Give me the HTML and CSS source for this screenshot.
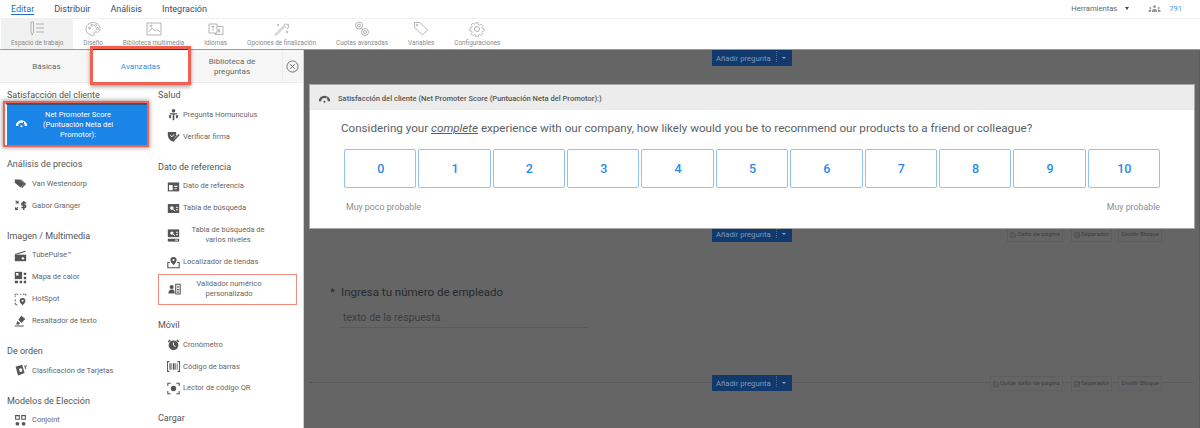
FILE: index.html
```html
<!doctype html>
<html lang="es">
    <head>
        <meta charset="UTF-8" />
        <title>Editar encuesta</title>
        <link rel="stylesheet" href="styles.css">
    </head>
    <body>
        <header class="topbar">
            <nav class="main-nav">
                <a class="active">Editar</a>
                <a>Distribuir</a>
                <a>Análisis</a>
                <a>Integración</a>
            </nav>
            <div class="tools">
                <span>Herramientas</span>
                <span class="caret"></span>
                <svg class="users" viewBox="0 0 14 8"><circle cx="7" cy="2" r="1.6"/><path d="M4 8c0-3 1-3.500 3-3.500S10 5 10 8z"/><circle cx="2.200" cy="3.500" r="1.100"/><path d="M0 8c0-2 .8-2.800 2.200-2.800.6 0 1 .1 1.300.4C3 6 3 7 3 8z"/><circle cx="11.800" cy="3.500" r="1.100"/><path d="M14 8c0-2-.8-2.800-2.200-2.800-.6 0-1 .1-1.300.4.500.4.500 1.400.500 2.400z"/></svg>
                <span class="count">791</span>
            </div>
        </header>

        <div class="toolbar">
            <div class="tool current">
                <svg viewBox="0 0 16 16"><path d="M2 1h2.500v10L3.250 14 2 11zM7 3h8M7 7h8M7 11h8"/></svg>
                <span>Espacio de trabajo</span>
            </div>
            <div class="tool">
                <svg viewBox="0 0 16 16"><path d="M8 1.500c4 0 7 2.500 7 6s-2.500 4-4 3.500-2.500.5-2 2-1 1.800-2.500 1.300C3 13.500 1 11 1 8c0-3.500 3-6.500 7-6.500z"/><circle cx="4.500" cy="7" r="1"/><circle cx="7" cy="4.200" r="1"/><circle cx="10.500" cy="4.500" r="1"/><circle cx="12.500" cy="7.500" r="1"/></svg>
                <span>Diseño</span>
            </div>
            <div class="tool">
                <svg viewBox="0 0 16 16"><path d="M1 2h14v12H1zM2.500 11l3.500-4 3 3 2-1.500 3 2.500"/><circle cx="5" cy="5" r="1"/></svg>
                <span>Biblioteca multimedia</span>
            </div>
            <div class="tool">
                <svg viewBox="0 0 16 16"><path d="M1 3h8v9H1zM9 5.500h6v8H7V12M3.500 5.500h3M5 5.500v4M10 11.500l1-3.500 1 3.500"/></svg>
                <span>Idiomas</span>
            </div>
            <div class="tool">
                <svg viewBox="0 0 16 16"><path d="M2 14.500l-1-1 9-9 1 1zM10 4.500l1.500-2 1 1 2-.5-.5 2 1 1-2 1.500-1-1M4 3v2M3 4h2M13 10v2M12 11h2"/></svg>
                <span>Opciones de finalización</span>
            </div>
            <div class="tool">
                <svg viewBox="0 0 16 16"><circle cx="5" cy="4.500" r="3.500"/><circle cx="5" cy="4.500" r="1.500"/><circle cx="11" cy="11" r="3.500"/><circle cx="11" cy="11" r="1.500"/><path d="M7.500 7l1 1.500"/></svg>
                <span>Cuotas avanzadas</span>
            </div>
            <div class="tool">
                <svg viewBox="0 0 16 16"><path d="M1.500 1.500h5.500l7.500 7.500-5 5L1.500 6.500z"/><circle cx="4" cy="4" r=".8"/></svg>
                <span>Variables</span>
            </div>
            <div class="tool">
                <svg viewBox="0 0 16 16"><circle cx="8" cy="8" r="2.500"/><path d="M6.800 1h2.400l.4 2 1.300.6 1.800-1.100 1.700 1.700-1.100 1.800.6 1.300 2 .4v2.400l-2 .4-.6 1.300 1.100 1.800-1.700 1.700-1.800-1.100-1.300.6-.4 2H6.800l-.4-2-1.300-.6-1.800 1.100-1.700-1.700 1.100-1.800-.6-1.300-2-.4V6.800l2-.4.6-1.300-1.100-1.800 1.700-1.700 1.800 1.100 1.300-.6z" transform="translate(.8 .8) scale(.9)"/></svg>
                <span>Configuraciones</span>
            </div>
        </div>

        <main class="workspace">
            <aside class="panel">
                <div class="tabs">
                    <div class="tab basic">Básicas</div>
                    <div class="tab tab-active">Avanzadas</div>
                    <div class="tab library">Biblioteca de preguntas</div>
                    <div class="tab close">
                        <svg viewBox="0 0 14 14"><circle cx="7" cy="7" r="6"/><path d="M4.500 4.500l5 5M9.500 4.500l-5 5"/></svg>
                    </div>
                </div>
                <div class="columns">
                    <div class="col">
                        <section>
                            <h3>Satisfacción del cliente</h3>
                            <div class="nps-item">
                                <svg viewBox="0 3 16 16"><path class="gauge" d="M2.500 11.500a5.500 5.500 0 0 1 11 0"/><path class="needle" d="M8 11l3-4.500"/><circle cx="8" cy="12" r="1.300"/></svg>
                                <span>Net Promoter Score (Puntuación Neta del Promotor):</span>
                            </div>
                        </section>
                        <section>
                            <h3>Análisis de precios</h3>
                            <div class="item"><svg viewBox="0 0 16 16"><path d="M1 3h6l6 5.500L8 13 1 7z"/><path d="M9 3l6 5.500-5 5-1-1 4-4-5.500-5.500z"/></svg><span>Van Westendorp</span></div>
                            <div class="item"><svg viewBox="0 0 16 16"><path d="M2 2l3 3M5 2v3H2M5 10l-3 3M2 10v3h3" class="thin"/><path d="M15 4.500h-4c-2 0-2 3 0 3h2c2 0 2 3 0 3H9M12 2.500v11" class="thick"/></svg><span>Gabor Granger</span></div>
                        </section>
                        <section>
                            <h3>Imagen / Multimedia</h3>
                            <div class="item"><svg viewBox="0 0 16 16"><path d="M1 7h14v8H1z"/><path d="M1 6L14 2l.5 1.500L1.500 7.500z"/><circle cx="11" cy="11.500" r="1.500" fill="#fff"/></svg><span>TubePulse™</span></div>
                            <div class="item"><svg viewBox="0 0 16 16"><path d="M1 1h9v9H1z"/><path d="M2.500 2.500h3v3h-3z" fill="#fff"/><path d="M12 2h3v3h-3zM12 7h3v3h-3zM1 12h4v3H1zM7 12h3v3H7zM12 12h3v3h-3z"/></svg><span>Mapa de calor</span></div>
                            <div class="item"><svg viewBox="0 0 16 16"><path class="thin" d="M5 1.500H1.500V5M1.500 8v2M1.500 12v2.500H4M11 1.500h3.500V4M7.500 1.500h1.500" stroke-dasharray="2 1"/><circle cx="10.500" cy="9.500" r="3.500"/><circle cx="10.500" cy="9.500" r="1.200" fill="#fff"/><path d="M8 12l2.500 3.500L13 12z"/></svg><span>HotSpot</span></div>
                            <div class="item"><svg viewBox="0 0 16 16"><path d="M9 2l5 4-5 5-3.500-4zM4.500 8.500l3 3-1.500 1.500H2.500zM1 14h11v1.500H1z"/></svg><span>Resaltador de texto</span></div>
                        </section>
                        <section>
                            <h3>De orden</h3>
                            <div class="item"><svg viewBox="0 0 16 16"><path d="M2 3.500L10 1l3 10-8 3z"/><path d="M6 6l3-1 1.500 4-3 1z" fill="#fff"/><path class="thin" d="M13 2l1.500 4M15 1.500v2"/></svg><span>Clasificación de Tarjetas</span></div>
                        </section>
                        <section>
                            <h3>Modelos de Elección</h3>
                            <div class="item"><svg viewBox="0 0 16 16"><path class="thin" d="M2 2h4.500v4.500H2zM9.500 2H14v4.500H9.500z"/><circle cx="4.200" cy="12" r="2.300"/><circle cx="11.800" cy="12" r="2.300"/></svg><span>Conjoint</span></div>
                        </section>
                    </div>
                    <div class="col">
                        <section>
                            <h3>Salud</h3>
                            <div class="item right"><svg viewBox="0 0 16 16"><circle cx="8" cy="3.500" r="2.200"/><path d="M3 6.500h10l-1 1.500H9v7H7V8H4zM2 9h3v3.500H3zM14 9h-3v3.500h2z"/></svg><span>Pregunta Homunculus</span></div>
                            <div class="item right"><svg viewBox="0 0 16 16"><path d="M1 2.500h10l.5 4-5 7.500C3 12.500 1 9 1 6z"/><path d="M4 6.500l2 2 2.500-3" class="white"/><path d="M7 14l8-8.500" class="thick"/></svg><span>Verificar firma</span></div>
                        </section>
                        <section>
                            <h3>Dato de referencia</h3>
                            <div class="item right"><svg viewBox="0 0 16 16"><path d="M1 3h14v11H1z"/><path d="M2.500 6h4.500v6.500H2.500zM9 7h4v1.500H9zM9 10h3v1.500H9z" fill="#fff"/></svg><span>Dato de referencia</span></div>
                            <div class="item right"><svg viewBox="0 0 16 16"><path d="M1 2.500h14v11H1z"/><circle cx="6" cy="7.500" r="2.200" fill="#fff"/><path d="M7.500 9.200l2.500 2" class="white"/><path d="M11 6.500h2.500M11 9.500h2.500" class="white"/></svg><span>Tabla de búsqueda</span></div>
                            <div class="item right tall"><svg viewBox="0 0 16 16"><path d="M1 .5h14v9.500H1z"/><circle cx="6" cy="5" r="2" fill="#fff"/><path d="M7.500 6.500l2 1.600M11 4h2.500M11 7h2.500" class="white"/><path d="M1 12h14v3.500H1z"/><path d="M10 13.700h3.500" class="white"/></svg><span class="centered">Tabla de búsqueda de varios niveles</span></div>
                            <div class="item right"><svg viewBox="0 0 16 16"><path class="outline" d="M3.500 8H1v6.500h14V8h-2.500"/><circle cx="8" cy="5" r="3.800"/><circle cx="8" cy="5" r="1.300" fill="#fff"/><path d="M5 8l3 3 3-3z"/></svg><span>Localizador de tiendas</span></div>
                            <div class="item right boxed"><svg viewBox="0 0 16 16"><circle cx="4.500" cy="5" r="2.500"/><path d="M.5 13c0-3.500 1.500-5 4-5s3 .8 3.500 2v3z"/><path class="outline" d="M9.500 1.500h5.500v12H9.500z"/><path d="M11 4h2.500v1.500H11zM11 7.500h2.500V9H11zM11 10.500h2.500V12H11z"/></svg><span class="centered">Validador numérico personalizado</span></div>
                        </section>
                        <section class="mobile">
                            <h3>Móvil</h3>
                            <div class="item right"><svg viewBox="0 0 16 16"><circle cx="8" cy="9" r="6"/><path d="M8 5.500V9l2.500 1.500" class="white"/><path d="M1.500 5L4 2.500M14.500 5L12 2.500" class="thick"/></svg><span>Cronómetro</span></div>
                            <div class="item right"><svg viewBox="0 0 16 16"><path class="thin" d="M3 2H.5v12H3M13 2h2.500v12H13"/><path d="M3 4h1.500v8H3zM5.500 4h.8v8h-.8zM7.300 4h2v8h-2zM10.300 4h.8v8h-.8zM12 4h1v8h-1z"/></svg><span>Código de barras</span></div>
                            <div class="item right"><svg viewBox="0 0 16 16"><path class="thin" d="M1 5V1.500h3.500M11.500 1.500H15V5M15 11v3.500h-3.500M4.500 14.500H1V11"/><circle cx="8" cy="8" r="3.300"/></svg><span>Lector de código QR</span></div>
                        </section>
                        <section>
                            <h3>Cargar</h3>
                        </section>
                    </div>
                </div>
            </aside>

            <div class="canvas">
                <div class="add-row first">
                    <div class="add-btn"><span>Añadir pregunta</span><span class="add-caret"></span></div>
                </div>

                <article class="card">
                    <div class="card-head">
                        <svg viewBox="0 0 16 16"><path class="gauge" d="M2.500 11.500a5.500 5.500 0 0 1 11 0"/><path class="needle" d="M8 11l3-4.500"/><circle cx="8" cy="12" r="1.300"/></svg>
                        <span>Satisfacción del cliente (Net Promoter Score (Puntuación Neta del Promotor):)</span>
                    </div>
                    <div class="card-body">
                        <p class="question">Considering your <em>complete</em> experience with our company, how likely would you be to recommend our products to a friend or colleague?</p>
                        <div class="scale">
                            <div>0</div><div>1</div><div>2</div><div>3</div><div>4</div><div>5</div><div>6</div><div>7</div><div>8</div><div>9</div><div>10</div>
                        </div>
                        <div class="scale-labels">
                            <span>Muy poco probable</span>
                            <span>Muy probable</span>
                        </div>
                    </div>
                </article>

                <div class="add-row second">
                    <div class="add-btn"><span>Añadir pregunta</span><span class="add-caret"></span></div>
                    <div class="row-links">
                        <span class="break"><svg viewBox="0 0 8 8"><path d="M1 1h4l2 2v4H1zM3 4h2"/></svg>Salto de página</span>
                        <span><svg viewBox="0 0 8 8"><path d="M1 1h6v6H1zM2.500 4l1.200 1.300L7.500 1.500"/></svg>Separador</span>
                        <span>Dividir Bloque</span>
                    </div>
                </div>

                <div class="employee">
                    <h2><span class="req">*</span>Ingresa tu número de empleado</h2>
                    <div class="answer">texto de la respuesta</div>
                </div>

                <div class="add-row third">
                    <div class="add-btn"><span>Añadir pregunta</span><span class="add-caret"></span></div>
                    <div class="row-links">
                        <span class="break"><svg viewBox="0 0 8 8"><path d="M1 1h4l2 2v4H1zM3 4h2"/></svg>Quitar salto de página</span>
                        <span><svg viewBox="0 0 8 8"><path d="M1 1h6v6H1zM2.500 4l1.200 1.300L7.500 1.500"/></svg>Separador</span>
                        <span>Dividir Bloque</span>
                    </div>
                </div>
            </div>
        </main>
    </body>
</html>
```

FILE: styles.css
```css
* {
    box-sizing: border-box;
}
html,
body {
    height: 100%;
}
body {
    margin: 0;
    overflow: hidden;
    display: flex;
    flex-direction: column;
    font-family: Roboto, sans-serif;
    color: #555;
    background: #fff;
}

/* top nav */
.topbar {
    height: 19px;
    flex: none;
    display: flex;
    justify-content: space-between;
    align-items: center;
    padding: 0 18px 1px 11px;
    border-bottom: 1px solid #f0f0f0;
}
.main-nav {
    display: flex;
    gap: 20px;
    font-size: 9px;
    color: #36506e;
}
.main-nav .active {
    color: #1c6fc2;
    text-decoration: underline;
    text-underline-offset: 2px;
}
.tools {
    display: flex;
    align-items: center;
    font-size: 7.6px;
    color: #666;
}
.caret {
    width: 0;
    height: 0;
    margin: 0 19px 0 8px;
    border: 2.5px solid transparent;
    border-top: 3px solid #444;
    border-bottom: none;
}
.users {
    width: 13px;
    height: 7px;
    fill: #999;
}
.count {
    margin-left: 8px;
    color: #3c97ec;
}

/* icon toolbar */
.toolbar {
    height: 30px;
    flex: none;
    display: flex;
    padding-left: 1px;
}
.tool {
    display: flex;
    flex-direction: column;
    align-items: center;
    justify-content: flex-end;
    padding: 0 10px 1px;
    font-size: 6.36px;
    line-height: 9px;
    color: #8b8b8b;
    white-space: nowrap;
}
.tool.current {
    background: #f1f1f1;
}
.tool svg {
    width: 16px;
    height: 16px;
    margin-bottom: 2px;
    fill: none;
    stroke: #a2a2a2;
    stroke-width: 0.8;
}

/* main split */
.workspace {
    flex: 1;
    min-height: 0;
    display: flex;
    background: #656565;
    border-top: 1px solid #9a9a9a;
}
.panel {
    width: 304px;
    flex: none;
    background: #fff;
    border-right: 1px solid #cfcfcf;
}
.tabs {
    height: 33px;
    display: grid;
    grid-template-columns: 93px 95px 94px 21px;
    background: #f6f6f6;
    border-bottom: 1px solid #ececec;
    font-size: 8.1px;
    color: #666;
    text-align: center;
}
.tab {
    display: flex;
    align-items: center;
    justify-content: center;
    line-height: 10.5px;
}
.tab-active {
    position: relative;
    z-index: 2;
    height: 33px;
    margin-top: -1px;
    background: #fff;
    color: #2f8fe8;
    border-top: 1px solid #1d3c6b;
    outline: 3px solid #f4604f;
    box-shadow: 0 2px 4px 3px rgba(0, 0, 0, 0.35);
}
.library {
    padding: 0 22px 0 16px;
}
.close {
    border-left: 1px solid #ececec;
}
.close svg {
    width: 13px;
    height: 13px;
    margin-right: 2px;
    fill: none;
    stroke: #666;
    stroke-width: 1;
}
.columns {
    display: grid;
    grid-template-columns: 144px 139px;
    column-gap: 7px;
    padding: 6px 0 0 7px;
}
section {
    margin-bottom: 13px;
}
section.mobile {
    margin-top: 14px;
}
h3 {
    height: 12px;
    margin: 0 0 3px;
    font-size: 9px;
    font-weight: 400;
    line-height: 12px;
    color: #555;
    white-space: nowrap;
}
.item {
    height: 21.8px;
    display: flex;
    align-items: center;
    padding-left: 7px;
    font-size: 7.5px;
    line-height: 10px;
    color: #666;
    white-space: nowrap;
}
.item svg {
    width: 13px;
    height: 13px;
    flex: none;
    margin-right: 5px;
    fill: #555;
}
.item.right {
    padding-left: 9px;
}
.item.right svg {
    margin-right: 3px;
}
.item.tall {
    height: 32px;
}
.centered {
    width: 90px;
    white-space: normal;
    text-align: center;
}
.item.boxed {
    height: 31px;
    margin-top: 1px;
    border: 1px solid #f28a80;
}
.thin,
.outline,
.thick,
.white,
.gauge,
.needle {
    fill: none;
    stroke: #555;
}
.thin,
.outline {
    stroke-width: 1.3;
}
.thick {
    stroke-width: 1.8;
}
.white {
    stroke: #fff;
    stroke-width: 1.2;
}
.gauge {
    stroke-width: 3;
}
.needle {
    stroke-width: 1.2;
}

/* highlighted question type */
.nps-item {
    position: relative;
    display: flex;
    align-items: center;
    width: 141.5px;
    height: 42px;
    margin: -1px 0 3px -2px;
    padding-left: 8px;
    background: #1b84e7;
    border-left: 2px solid #fff;
    border-top: 2px solid #2b5a8c;
    outline: 2.5px solid #f4604f;
    box-shadow: 0 0 4px 3px rgba(0, 0, 0, 0.35);
    font-size: 7.5px;
    line-height: 10px;
    color: #fff;
    text-align: center;
}
.nps-item svg {
    width: 13px;
    height: 13px;
    flex: none;
    margin-right: 5px;
    fill: #fff;
}
.nps-item span {
    width: 90px;
}
.nps-item .gauge,
.nps-item .needle {
    stroke: #fff;
}
.nps-item .needle {
    stroke: #1b84e7;
}

/* survey canvas */
.canvas {
    flex: 1;
    min-width: 0;
    padding: 0 5px 0 6px;
    border-right: 1px solid #5a5a5a;
}
.add-row {
    position: relative;
    height: 16px;
    display: flex;
    justify-content: center;
}
.add-btn {
    width: 80px;
    height: 16px;
    display: flex;
    align-items: center;
    justify-content: space-between;
    padding: 0 4px;
    background: #12396b;
    border-radius: 1px;
    font-size: 7.7px;
    color: #7e99bc;
    white-space: nowrap;
}
.add-caret {
    position: relative;
    width: 0;
    height: 0;
    margin-right: 2px;
    border: 2px solid transparent;
    border-top: 2.5px solid #8ba5c6;
    border-bottom: none;
}
.add-caret::before {
    content: "";
    position: absolute;
    top: -8px;
    left: -8px;
    height: 11px;
    border-left: 1px dotted #4f6f99;
}
.row-links {
    position: absolute;
    top: 1px;
    right: 32px;
    display: flex;
    gap: 6px;
    font-size: 6.2px;
    line-height: 13px;
    color: #3f3f3f;
    white-space: nowrap;
}
.row-links span {
    display: flex;
    align-items: center;
    padding: 0 2px;
    background: #656565;
    border: 1px solid #5e5e5e;
}
.row-links .break {
    margin-right: 2px;
}
.row-links svg {
    width: 6px;
    height: 6px;
    margin-right: 1px;
    fill: none;
    stroke: #3f3f3f;
    stroke-width: 0.8;
}
.card {
    position: relative;
    z-index: 1;
    height: 143px;
    margin-top: 19px;
    background: #fff;
    box-shadow: 0 0 0 1px #a8a8a8;
}
.card-head {
    height: 25px;
    display: flex;
    align-items: center;
    padding: 1px 0 0 8px;
    background: #ececec;
    font-size: 7.55px;
    font-weight: 500;
    color: #555;
}
.card-head svg {
    width: 13px;
    height: 13px;
    margin-right: 7px;
    fill: #555;
}
.card-head .needle {
    stroke: #ececec;
}
.card-body {
    padding: 10px 34px 0;
}
.question {
    margin: 0 0 0 -3px;
    font-size: 11.63px;
    line-height: 17px;
    color: #5a5f66;
    white-space: nowrap;
}
.question em {
    text-decoration: underline;
}
.scale {
    display: grid;
    grid-template-columns: repeat(11, 1fr);
    gap: 2px;
    margin-top: 12px;
}
.scale div {
    height: 39px;
    display: flex;
    align-items: center;
    justify-content: center;
    padding-left: 1px;
    border: 1px solid #90c4f5;
    border-radius: 2px;
    font-size: 12.5px;
    font-weight: 500;
    color: #2a8bea;
}
.scale-labels {
    display: flex;
    justify-content: space-between;
    padding-left: 2px;
    margin-top: 14px;
    font-size: 8.8px;
    color: #8b8f94;
}
.add-row.second {
    margin-top: -2px;
}
.employee {
    height: 133px;
    padding: 42px 0 0 31px;
    color: #2d3138;
}
.employee h2 {
    position: relative;
    margin: 0;
    font-size: 11.5px;
    font-weight: 400;
    line-height: 16px;
    color: #262a31;
}
.req {
    position: absolute;
    left: -11px;
}
.answer {
    width: 247px;
    height: 18px;
    margin-top: 10px;
    padding-left: 2px;
    border-bottom: 1px solid #5a5a5a;
    font-size: 10.5px;
    line-height: 16px;
    color: #3b3e42;
}
.add-row.third::before {
    content: "";
    position: absolute;
    top: 7px;
    left: 0;
    right: 0;
    border-top: 1px dotted #4a5560;
}
.add-row.third .add-btn {
    position: relative;
}
```
